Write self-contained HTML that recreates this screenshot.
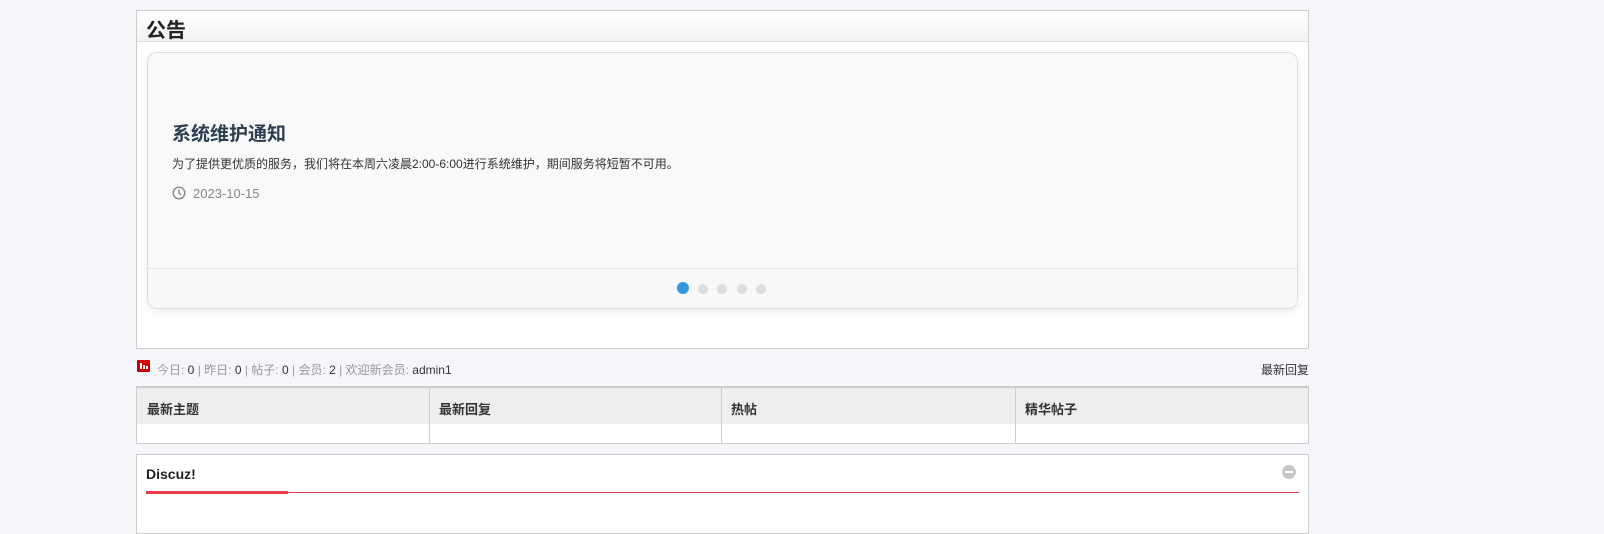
<!DOCTYPE html>
<html><head><meta charset="utf-8"><style>
*{box-sizing:border-box;margin:0;padding:0}
body{width:1604px;height:524px;overflow:hidden;background:#f5f6fa;font-family:"Liberation Sans","Noto Sans CJK SC",sans-serif;color:#333;position:relative}
.abs{position:absolute}
#box{left:136px;top:10px;width:1173px;height:339px;background:#fff;border:1px solid #ccc}
#hd{left:0;top:0;width:100%;height:31px;background:linear-gradient(#fff,#f2f2f2);border-bottom:1px solid #ddd}
#hd span{position:absolute;left:9px;top:3px;font-size:20px;font-weight:bold;color:#222}
#card{left:10px;top:41px;width:1151px;height:257px;background:#f9f9f9;border:1px solid #e0e0e0;border-radius:10px;box-shadow:0 3px 8px rgba(0,0,0,.08);overflow:hidden}
#foot{left:0;top:215px;width:100%;height:42px;background:#f7f8fa;border-top:1px solid #e6e6e6}
.dot{position:absolute;width:10px;height:10px;border-radius:50%;background:#ddd;top:15px}
</style></head><body>
<div id="box" class="abs">
 <div id="hd" class="abs"><span>公告</span></div>
 <div id="card" class="abs">
  <div class="abs" style="left:24px;top:66px;font-size:19px;font-weight:bold;color:#2c3e50">系统维护通知</div>
  <div class="abs" style="left:24px;top:102px;font-size:12px;color:#333">为了提供更优质的服务，我们将在本周六凌晨2:00-6:00进行系统维护，期间服务将短暂不可用。</div>
  <svg class="abs" style="left:24px;top:133px" width="14" height="14" viewBox="0 0 14 14"><circle cx="7" cy="7" r="5.8" fill="none" stroke="#888" stroke-width="1.4"/><path d="M7 3.5V7l2.3 2" fill="none" stroke="#888" stroke-width="1.4"/></svg>
  <div class="abs" style="left:45px;top:133px;font-size:13px;color:#888">2023-10-15</div>
  <div id="foot" class="abs">
   <div class="dot" style="left:529px;top:13px;width:12px;height:12px;background:#3498db"></div>
   <div class="dot" style="left:550px"></div>
   <div class="dot" style="left:569px"></div>
   <div class="dot" style="left:589px"></div>
   <div class="dot" style="left:608px"></div>
  </div>
 </div>
</div>
<div class="abs" style="left:137px;top:360px;width:13px;height:12px;background:#c00;border-radius:1px"><div style="position:absolute;left:3px;top:3px;width:2px;height:6px;background:#fff"></div><div style="position:absolute;left:6px;top:5px;width:2px;height:4px;background:#fff"></div><div style="position:absolute;left:9px;top:6px;width:2px;height:3px;background:#fff"></div></div>
<div class="abs" style="left:157px;top:361px;font-size:12px;color:#999">今日: <span style="color:#333">0</span> | 昨日: <span style="color:#333">0</span> | 帖子: <span style="color:#333">0</span> | 会员: <span style="color:#333">2</span> | 欢迎新会员: <span style="color:#333">admin1</span></div>
<div class="abs" style="left:1261px;top:361px;font-size:12px;color:#333">最新回复</div>
<div class="abs" style="left:136px;top:386px;width:1173px;height:58px;background:#fff;border:1px solid #ccc;border-top:2px solid #ccc">
 <div class="abs" style="left:0;top:0;width:100%;height:36px;background:#eee"></div>
 <div class="abs" style="left:292px;top:0;width:1px;height:56px;background:#ccc"></div>
 <div class="abs" style="left:584px;top:0;width:1px;height:56px;background:#ccc"></div>
 <div class="abs" style="left:878px;top:0;width:1px;height:56px;background:#ccc"></div>
 <div class="abs" style="left:10px;top:11px;font-size:13px;font-weight:bold;color:#333">最新主题</div>
 <div class="abs" style="left:302px;top:11px;font-size:13px;font-weight:bold;color:#333">最新回复</div>
 <div class="abs" style="left:594px;top:11px;font-size:13px;font-weight:bold;color:#333">热帖</div>
 <div class="abs" style="left:888px;top:11px;font-size:13px;font-weight:bold;color:#333">精华帖子</div>
</div>
<div class="abs" style="left:136px;top:454px;width:1173px;height:80px;background:#fff;border:1px solid #ccc">
 <div class="abs" style="left:9px;top:11px;font-size:14px;font-weight:bold;color:#222">Discuz!</div>
 <div class="abs" style="left:9px;top:37px;width:1153px;height:1px;background:#e8384a"></div>
 <div class="abs" style="left:9px;top:36px;width:142px;height:3px;background:#e8384a"></div>
 <div class="abs" style="left:1145px;top:10px;width:14px;height:14px;border-radius:50%;background:#c8c8c8"><div style="position:absolute;left:3px;top:6px;width:8px;height:2px;background:#fff"></div></div>
</div>
</body></html>
